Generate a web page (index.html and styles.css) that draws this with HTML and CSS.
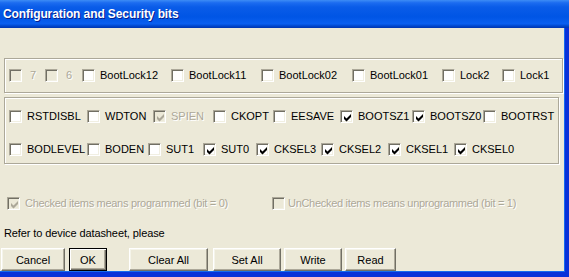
FILE: index.html
```html
<!DOCTYPE html>
<html lang="en">
<head>
    <meta charset="UTF-8">
    <title>Configuration and Security bits</title>
    <link rel="stylesheet" href="styles.css">
</head>
<body>
    <div class="window">
        <div class="titlebar">Configuration and Security bits</div>

        <!-- lock bits -->
        <div class="group group-lock">
            <div class="bit off"><span class="cb"></span><span class="txt digit">7</span></div>
            <div class="bit off"><span class="cb"></span><span class="txt digit">6</span></div>
            <div class="bit"><span class="cb"></span><span class="txt">BootLock12</span></div>
            <div class="bit"><span class="cb"></span><span class="txt">BootLock11</span></div>
            <div class="bit"><span class="cb"></span><span class="txt">BootLock02</span></div>
            <div class="bit"><span class="cb"></span><span class="txt">BootLock01</span></div>
            <div class="bit"><span class="cb"></span><span class="txt">Lock2</span></div>
            <div class="bit"><span class="cb"></span><span class="txt">Lock1</span></div>
        </div>

        <!-- fuse bits -->
        <div class="group group-fuse">
            <div class="row row-high">
                <div class="bit"><span class="cb"></span><span class="txt">RSTDISBL</span></div>
                <div class="bit"><span class="cb"></span><span class="txt">WDTON</span></div>
                <div class="bit off"><span class="cb"><svg viewBox="0 0 9 9"><path d="M1 3L3.5 5.5L8 1V4L3.5 8.5L1 6Z"/></svg></span><span class="txt">SPIEN</span></div>
                <div class="bit"><span class="cb"></span><span class="txt">CKOPT</span></div>
                <div class="bit"><span class="cb"></span><span class="txt">EESAVE</span></div>
                <div class="bit"><span class="cb"><svg viewBox="0 0 9 9"><path d="M1 3L3.5 5.5L8 1V4L3.5 8.5L1 6Z"/></svg></span><span class="txt">BOOTSZ1</span></div>
                <div class="bit"><span class="cb"><svg viewBox="0 0 9 9"><path d="M1 3L3.5 5.5L8 1V4L3.5 8.5L1 6Z"/></svg></span><span class="txt">BOOTSZ0</span></div>
                <div class="bit"><span class="cb"></span><span class="txt">BOOTRST</span></div>
            </div>
            <div class="row row-low">
                <div class="bit"><span class="cb"></span><span class="txt">BODLEVEL</span></div>
                <div class="bit"><span class="cb"></span><span class="txt">BODEN</span></div>
                <div class="bit"><span class="cb"></span><span class="txt">SUT1</span></div>
                <div class="bit"><span class="cb"><svg viewBox="0 0 9 9"><path d="M1 3L3.5 5.5L8 1V4L3.5 8.5L1 6Z"/></svg></span><span class="txt">SUT0</span></div>
                <div class="bit"><span class="cb"><svg viewBox="0 0 9 9"><path d="M1 3L3.5 5.5L8 1V4L3.5 8.5L1 6Z"/></svg></span><span class="txt">CKSEL3</span></div>
                <div class="bit"><span class="cb"><svg viewBox="0 0 9 9"><path d="M1 3L3.5 5.5L8 1V4L3.5 8.5L1 6Z"/></svg></span><span class="txt">CKSEL2</span></div>
                <div class="bit"><span class="cb"><svg viewBox="0 0 9 9"><path d="M1 3L3.5 5.5L8 1V4L3.5 8.5L1 6Z"/></svg></span><span class="txt">CKSEL1</span></div>
                <div class="bit"><span class="cb"><svg viewBox="0 0 9 9"><path d="M1 3L3.5 5.5L8 1V4L3.5 8.5L1 6Z"/></svg></span><span class="txt">CKSEL0</span></div>
            </div>
        </div>

        <div class="legend">
            <div class="bit off"><span class="cb"><svg viewBox="0 0 9 9"><path d="M1 3L3.5 5.5L8 1V4L3.5 8.5L1 6Z"/></svg></span><span class="txt">Checked items means programmed (bit = 0)</span></div>
            <div class="bit off"><span class="cb"></span><span class="txt">UnChecked items means unprogrammed (bit = 1)</span></div>
        </div>

        <div class="note">Refer to device datasheet, please</div>

        <div class="buttons">
            <button class="btn btn-cancel">Cancel</button>
            <button class="btn btn-ok">OK</button>
            <button class="btn btn-clear">Clear All</button>
            <button class="btn btn-set">Set All</button>
            <button class="btn btn-write">Write</button>
            <button class="btn btn-read">Read</button>
        </div>
    </div>
</body>
</html>
```

FILE: styles.css
```css
body {
    margin: 0;
    width: 569px;
    height: 277px;
    overflow: hidden;
    background: #ece9d8;
    font-family: "Liberation Sans", Arial, sans-serif;
    font-size: 11px;
    color: #000;
}
.window {
    box-sizing: border-box;
    width: 569px;
    height: 277px;
    border-right: 4px solid #0831d9;
    border-bottom: 5px solid #0831d9;
    box-shadow: inset -1px -1px #166aee;
}
.titlebar {
    height: 28px;
    line-height: 29px;
    padding-left: 3px;
    margin-right: -4px;
    color: #fff;
    font-weight: bold;
    font-size: 12px;
    letter-spacing: -0.1px;
    text-shadow: 1px 1px #0a1e8c;
    background: linear-gradient(to bottom, #3d8cf5 0%, #1c6cf0 10%, #0a5ce8 25%, #0055e5 60%, #0a5ff0 85%, #0046cc 93%, #0035b0 100%);
}

/* etched group frame */
.group {
    box-sizing: border-box;
    margin-left: 4px;
    border: 1px solid #aca899;
    box-shadow: inset 1px 1px #fff, 1px 1px #fff;
    padding: 0 4px;
}
.group-lock {
    width: 559px;
    height: 35px;
    margin-top: 30px;
    display: grid;
    grid-template-columns: 36px 37px 89px 90px 91px 90px 60px auto;
    align-items: center;
}
.group-fuse {
    width: 555px;
    height: 67px;
    margin-top: 4px;
    padding-top: 2px;
}
.row {
    display: grid;
    height: 33px;
    align-items: center;
}
.row-high {
    grid-template-columns: 78px 66px 60px 60px 67px 72px 71px auto;
}
.row-low {
    grid-template-columns: 78px 61px 55px 53px 65px 67px 66px auto;
}

/* checkbox + label */
.bit {
    display: flex;
    align-items: center;
    white-space: nowrap;
}
.cb {
    box-sizing: border-box;
    flex: none;
    width: 13px;
    height: 13px;
    display: flex;
    align-items: center;
    justify-content: center;
    border: 1px solid;
    border-color: #aca899 #fff #fff #aca899;
    box-shadow: inset 1px 1px #716f64, inset -1px -1px #f1efe2;
    background: #fff;
}
.cb svg {
    width: 9px;
    height: 9px;
    margin: 1px 0 0 1px;
    fill: #000;
}
.txt {
    margin-left: 5px;
    line-height: 13px;
}
.txt.digit {
    margin-left: 8px;
}
.off .cb {
    background: #ece9d8;
}
.off .cb svg {
    fill: #aca899;
}
.off .txt {
    color: #aca899;
    text-shadow: 1px 1px #fff;
}

.legend {
    display: grid;
    grid-template-columns: 265px auto;
    margin: 33px 0 0 7px;
    height: 13px;
    align-items: center;
    letter-spacing: -0.3px;
}
.legend .bit:last-child .txt {
    margin-left: 3px;
}
.note {
    margin: 17px 0 0 4px;
    line-height: 13px;
    letter-spacing: -0.1px;
}

.buttons {
    display: flex;
    margin: 8px 0 0 1px;
}
.btn {
    box-sizing: border-box;
    height: 23px;
    padding: 0;
    font-family: inherit;
    font-size: 11px;
    color: #000;
    background: #ece9d8;
    border: 1px solid;
    border-color: #fff #716f64 #716f64 #fff;
    box-shadow: inset -1px -1px #aca899, inset 1px 1px #f5f4ea;
}
.btn-cancel { width: 64px; }
.btn-ok {
    width: 38px;
    margin-left: 4px;
    border-color: #000;
    box-shadow: inset 1px 1px #fff, inset -1px -1px #716f64, inset -2px -2px #aca899;
}
.btn-clear { width: 79px; margin-left: 22px; }
.btn-set { width: 68px; margin-left: 5px; }
.btn-write { width: 58px; margin-left: 3px; }
.btn-read { width: 51px; margin-left: 3px; }
```
